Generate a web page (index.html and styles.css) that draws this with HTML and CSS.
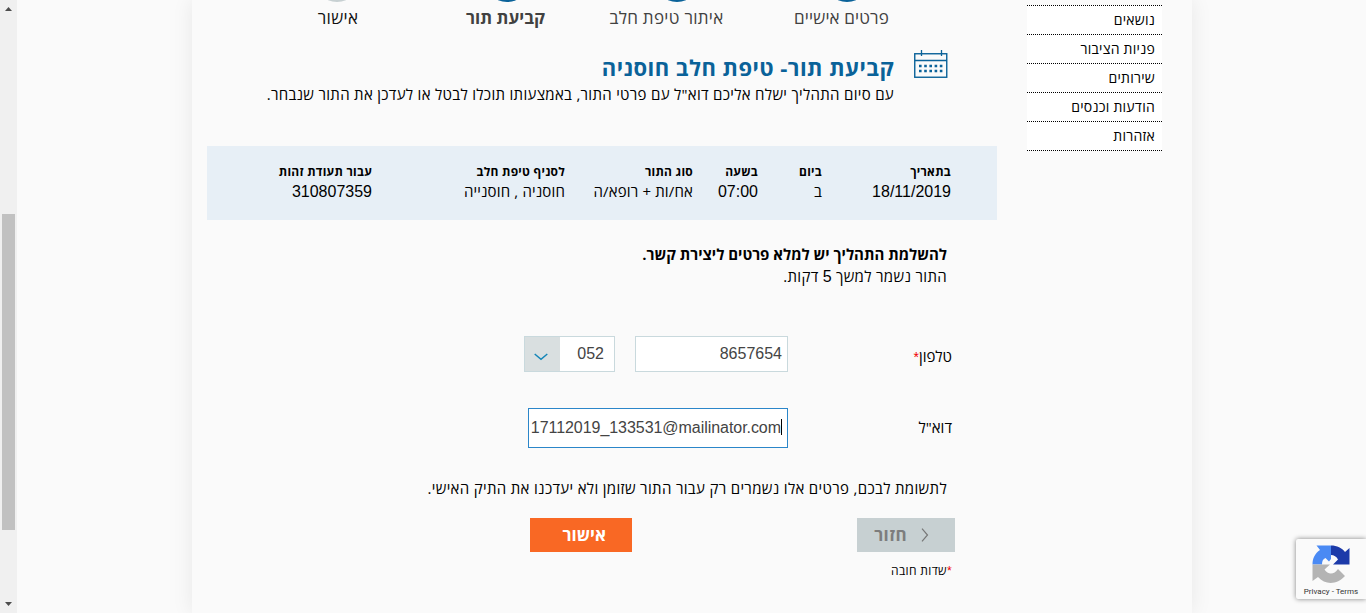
FILE: index.html
```html
<!DOCTYPE html>
<html lang="he">
<head>
<meta charset="utf-8">
<title>קביעת תור</title>
<link rel="stylesheet" href="styles.css">
</head>
<body>
<div class="scrollbar">
  <svg class="arrow" width="7" height="4" viewBox="0 0 7 4"><path d="M0 4L3.5 0L7 4Z"/></svg>
  <div class="thumb"></div>
  <svg class="arrow" width="7" height="4" viewBox="0 0 7 4"><path d="M0 0L3.5 4L7 0Z"/></svg>
</div>
<div class="page" dir="rtl">
  <nav class="side">
    <a>נושאים</a>
    <a>פניות הציבור</a>
    <a>שירותים</a>
    <a>הודעות וכנסים</a>
    <a>אזהרות</a>
  </nav>
  <main class="content">
    <div class="steps">
      <div class="step"><i class="dot"></i><span class="lbl l1">פרטים אישיים</span></div>
      <div class="step"><i class="dot"></i><span class="lbl l2">איתור טיפת חלב</span></div>
      <div class="step"><i class="dot"></i><span class="lbl l3">קביעת תור</span></div>
      <div class="step"><i class="dot off"></i><span class="lbl l4">אישור</span></div>
    </div>
    <header class="head">
      <svg class="cal" width="34" height="30" viewBox="0 0 34 30" fill="none" stroke="#0a6299">
        <rect x=".75" y="3.75" width="32" height="23.500" stroke-width="1.4"/>
        <path d="M1 10.500H33M7.5 0V6M27.5 0V6" stroke-width="1.3"/>
        <path d="M5 16H29M5 21H29" stroke-width="2.5" stroke-dasharray="2.6 2.6"/>
      </svg>
      <div class="titles">
        <h1>קביעת תור- טיפת חלב חוסניה</h1>
        <p>עם סיום התהליך ישלח אליכם דוא"ל עם פרטי התור, באמצעותו תוכלו לבטל או לעדכן את התור שנבחר.</p>
      </div>
    </header>
    <dl class="info">
      <div class="c1"><dt>בתאריך</dt><dd class="num">18/11/2019</dd></div>
      <div class="c2"><dt>ביום</dt><dd>ב</dd></div>
      <div class="c3"><dt>בשעה</dt><dd class="num">07:00</dd></div>
      <div class="c4"><dt>סוג התור</dt><dd>אח/ות + רופא/ה</dd></div>
      <div class="c5"><dt>לסניף טיפת חלב</dt><dd>חוסניה , חוסנייה</dd></div>
      <div class="c6"><dt>עבור תעודת זהות</dt><dd class="num">310807359</dd></div>
    </dl>
    <section class="note">
      <strong>להשלמת התהליך יש למלא פרטים ליצירת קשר.</strong>
      <span>התור נשמר למשך <b class="digit">5</b> דקות.</span>
    </section>
    <div class="row phone">
      <label>טלפון<em>*</em></label>
      <div class="box number">8657654</div>
      <div class="box prefix"><span>052</span><div class="drop"><svg width="14" height="8" viewBox="0 0 14 8" fill="none" stroke="#1486b8" stroke-width="1.5"><path d="M.7 1L7 6.3L13.3 1"/></svg></div></div>
    </div>
    <div class="row mail">
      <label>דוא"ל</label>
      <div class="box email" dir="ltr"><span>17112019_133531@mailinator.com</span><i class="caret"></i></div>
    </div>
    <p class="notice">לתשומת לבכם, פרטים אלו נשמרים רק עבור התור שזומן ולא יעדכנו את התיק האישי.</p>
    <div class="buttons">
      <div class="btn back"><svg width="8" height="14" viewBox="0 0 8 14" fill="none" stroke="#777" stroke-width="1.2"><path d="M1 .7L6.5 7L1 13.3"/></svg><span>חזור</span></div>
      <div class="btn ok">אישור</div>
    </div>
    <p class="required"><em>*</em>שדות חובה</p>
  </main>
</div>
<div class="captcha">
  <svg width="39" height="39" viewBox="0 0 39 39">
    <path fill="#1c3aa9" d="M19 .5C25 .5 30 3 33 7L37.500 3V19.500H21L26 14.500C24.500 11.500 22 10 19 10Z"/>
    <path fill="#4a8af4" d="M19 .5H4.500L8 5C3 8.500 .5 13 .5 19.500H10C10 16 11 14 13.500 13L17 16.500L19 14Z"/>
    <path fill="#b4b4b4" d="M.5 19.500H18L12.500 24.500C16 30 22 30 26 24L33 31C25 40 13 40 6 32L.5 36Z"/>
  </svg>
  <div>Privacy - Terms</div>
</div>
</body>
</html>
```
FILE: styles.css
```css
* { box-sizing: border-box; }
body {
  margin: 0;
  width: 1366px;
  height: 613px;
  overflow: hidden;
  display: flex;
  background: #fafafa;
  color: #000;
  font-family: "Open Sans", "Liberation Sans", sans-serif;
  font-size: 15px;
}
h1, p, dl, dd { margin: 0; }
em { color: #f00000; font: 14px "Liberation Sans", Arial, sans-serif; }
.scrollbar {
  width: 17px;
  height: 613px;
  background: #f0f0f0;
  display: flex;
  flex-direction: column;
  align-items: center;
  padding: 7px 0;
}
.arrow { display: block; fill: #4d4d4d; }
.thumb { width: 13px; height: 316px; margin: 203px 0 auto; background: #c1c1c1; }
.page {
  width: 1000px;
  height: 613px;
  margin-left: 175px;
  padding: 0 30px 0 15px;
  display: flex;
  justify-content: space-between;
  background: #fafafa;
  box-shadow: 0 0 20px rgba(0, 0, 0, .08);
}
.side { width: 135px; padding-top: 5px; }
.side a {
  display: block;
  height: 29px;
  padding-right: 7px;
  border-top: 1px dotted #000;
  background: #fff;
  line-height: 27px;
  font-size: 14px;
  letter-spacing: .25px;
}
.side a:last-child { height: 30px; border-bottom: 1px dotted #000; }
.content { width: 790px; height: 613px; overflow: hidden; }
.steps { height: 49px; display: flex; padding-right: 65px; }
.step { width: 170px; display: flex; flex-direction: column; align-items: center; font-size: 17px; color: #414141; }
.dot { width: 46px; height: 46px; margin-top: -44px; border-radius: 50%; background: #0a6299; flex: none; }
.dot.off { background: #c7d0d2; }
.lbl { line-height: 24px; margin-top: 4px; white-space: nowrap; }
.l1 { margin-right: 11px; letter-spacing: .15px; }
.l2 { margin-right: 21px; letter-spacing: .3px; }
.l3 { font-weight: 700; margin-right: 3px; }
.l4 { font-weight: 500; color: #111; letter-spacing: .3px; margin-left: 2px; }
.head { display: flex; height: 97px; padding-right: 49px; gap: 20px; }
.cal { margin-top: 1px; }
h1 { font-size: 22px; line-height: 36px; color: #0a6299; white-space: nowrap; letter-spacing: .47px; }
.head p { line-height: 19px; white-space: nowrap; letter-spacing: .3px; }
.info { display: flex; width: 790px; height: 74px; padding: 17px 46px 0 0; background: #e7eff6; white-space: nowrap; }
dt { font-size: 12px; line-height: 18px; font-weight: 700; letter-spacing: .25px; }
dd { line-height: 20px; letter-spacing: .15px; }
.num, .digit, .box { font-family: "Liberation Sans", Arial, sans-serif; font-size: 16px; font-weight: 400; letter-spacing: 0; }
.num { line-height: 22px; }
.c1 { width: 129px; }
.c2 { width: 64px; }
.c3 { width: 65px; }
.c4 { width: 128px; }
.c5 { width: 193px; }
.note { display: flex; flex-direction: column; padding: 23px 50px 0 0; line-height: 22px; height: 116px; white-space: nowrap; }
.note span { letter-spacing: .33px; }
.row { display: flex; padding-right: 45px; }
label { width: 164px; }
.box { background: #fff; border: 1px solid #c9d9dd; color: #444; }
.phone { height: 72px; }
.phone label { line-height: 41px; }
.number { width: 153px; height: 36px; padding-right: 5px; line-height: 33px; }
.prefix { width: 91px; height: 36px; margin-right: 20px; display: flex; justify-content: space-between; line-height: 33px; padding-right: 10px; }
.drop { width: 35px; background: #d9dfe0; display: flex; justify-content: center; padding: 16px 2px 0 0; }
.drop svg { margin-right: 1px; }
.mail label { line-height: 39px; }
.email { width: 260px; height: 40px; border-color: #2b86c9; line-height: 37px; display: flex; justify-content: flex-end; padding-right: 5px; letter-spacing: -.05px; }
.caret { width: 1px; height: 16px; margin-top: 10px; background: #000; }
.notice { padding: 29px 50px 0 0; height: 70px; line-height: 22px; white-space: nowrap; letter-spacing: .33px; }
.buttons { display: flex; padding-right: 42px; gap: 225px; }
.btn { height: 34px; line-height: 34px; font-size: 17px; font-weight: 700; }
.back { width: 98px; background: #c7d0d2; color: #7d7d7d; display: flex; align-items: center; gap: 14px; padding-right: 26px; letter-spacing: .4px; }
.ok { width: 102px; background: #f96824; color: #fff; padding-right: 26px; }
.required { padding: 9px 45px 0 0; font-size: 12px; line-height: 20px; letter-spacing: .35px; }
.required em { font-size: 12px; }
.captcha {
  position: absolute;
  left: 1296px;
  top: 539px;
  width: 70px;
  height: 60px;
  padding-top: 6px;
  overflow: hidden;
  background: #fafafa;
  border-radius: 2px 0 0 2px;
  box-shadow: 0 0 5px gray;
  text-align: center;
  font: 8px/12px Roboto, sans-serif;
  color: #333;
}
.captcha svg { display: block; margin: 0 auto 2px 16px; }
```
